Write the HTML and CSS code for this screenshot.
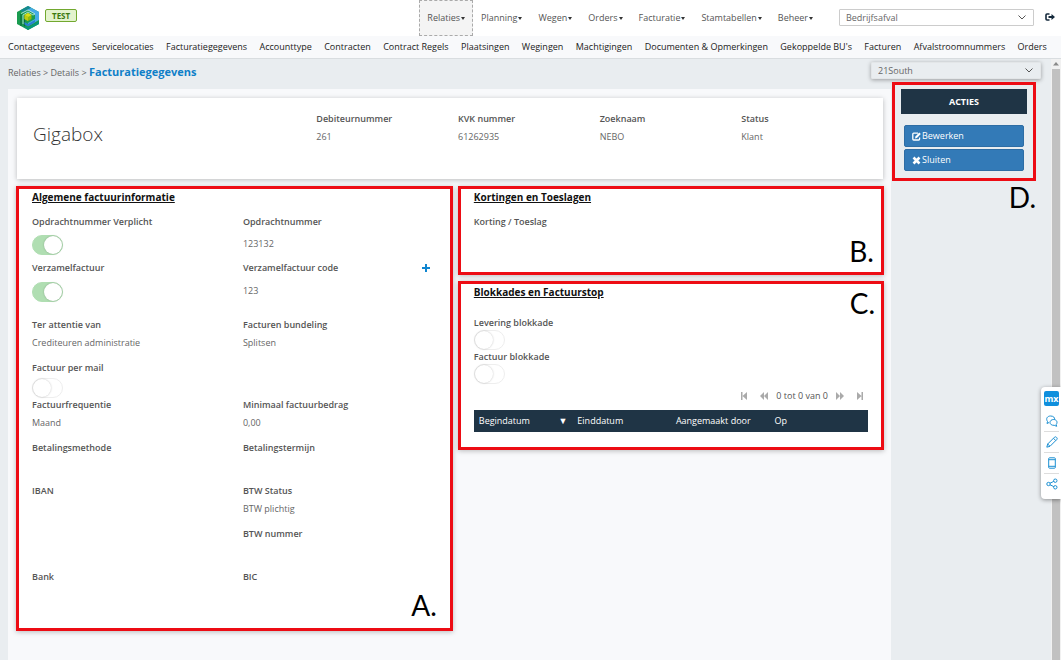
FILE: index.html
```html
<!DOCTYPE html>
<html lang="nl">
<head>
<meta charset="utf-8">
<title>Facturatiegegevens</title>
<meta name="viewport" content="width=device-width, initial-scale=1">
<link rel="stylesheet" href="styles.css">
</head>
<body>
<header class="topbar">
  <svg class="logo" viewBox="0 0 22 24" aria-label="Logo">
    <path d="M11 0 22 6v12l-11 6L0 18V6z" fill="#1a9c50"/>
    <path d="M11 0 22 6v8l-7 4-4 2v-3l7-4V8l-7-4-3-2z" fill="#45abe6"/>
    <path d="M11 0 3 4.400l3 1.800 5-2.700 3-1.700z" fill="#168a8e"/>
    <path d="M4 8v12M7.500 9v12" stroke="#0b6a3a" stroke-width="1.200"/>
    <path d="M4 7.500 11 4l7 4-2 1-5-3-5 3v9" fill="none" stroke="#c9ecf2" stroke-width=".8"/>
    <path d="M7.500 16 11 18l7-4v2.500l-7 4-3.500-2z" fill="#2a7fd0"/>
    <path d="M5 19.500 11 21.500l11-6V18l-11 6z" fill="#08967c"/>
    <path d="M11 7l3.500 2v4L11 15l-3.500-2V9z" fill="#8fb80e"/>
    <path d="M11 7l3.500 2L11 11 7.500 9z" fill="#d8de1a"/>
    <path d="M7.500 9 11 11v4l-3.500-2z" fill="#bccb12"/>
  </svg>
  <span class="env">TEST</span>
  <nav class="mainnav">
    <button class="active">Relaties</button>
    <button>Planning</button>
    <button>Wegen</button>
    <button>Orders</button>
    <button>Facturatie</button>
    <button>Stamtabellen</button>
    <button>Beheer</button>
  </nav>
  <select class="pick pick-unit" aria-label="Bedrijfsonderdeel"><option>Bedrijfsafval</option></select>
  <button class="logout" aria-label="Uitloggen">
    <svg viewBox="0 0 10 8"><path d="M4.500 1H2Q1 1 1 2v4q0 1 1 1h2.500" fill="none" stroke="#14293b" stroke-width="1.600"/><path d="M3.500 3h3V1L10 4 6.500 7V5h-3z" fill="#14293b"/></svg>
  </button>
</header>
<nav class="subnav">
  <a href="#">Contactgegevens</a>
  <a href="#">Servicelocaties</a>
  <a href="#">Facturatiegegevens</a>
  <a href="#">Accounttype</a>
  <a href="#">Contracten</a>
  <a href="#">Contract Regels</a>
  <a href="#">Plaatsingen</a>
  <a href="#">Wegingen</a>
  <a href="#">Machtigingen</a>
  <a href="#">Documenten &amp; Opmerkingen</a>
  <a href="#">Gekoppelde BU's</a>
  <a href="#">Facturen</a>
  <a href="#">Afvalstroomnummers</a>
  <a href="#">Orders</a>
</nav>
<div class="viewport">
  <div class="content">
    <div class="crumbs">
      <p>Relaties &gt; Details &gt; <strong>Facturatiegegevens</strong></p>
      <select class="pick pick-site" aria-label="Locatie"><option>21South</option></select>
    </div>
    <div class="columns">
      <main class="workspace">
        <section class="card summary">
          <h1>Gigabox</h1>
          <div class="field"><b>Debiteurnummer</b><span>261</span></div>
          <div class="field"><b>KVK nummer</b><span>61262935</span></div>
          <div class="field"><b>Zoeknaam</b><span>NEBO</span></div>
          <div class="field"><b>Status</b><span>Klant</span></div>
        </section>
        <div class="panels">
          <section class="panel general">
            <h2>Algemene factuurinformatie</h2>
            <div class="row roomy">
              <div class="field"><label for="po">Opdrachtnummer Verplicht</label><input class="switch" type="checkbox" id="po" checked></div>
              <div class="field"><b>Opdrachtnummer</b><span>123132</span></div>
            </div>
            <div class="row roomy spaced">
              <div class="field"><label for="verz">Verzamelfactuur</label><input class="switch" type="checkbox" id="verz" checked></div>
              <div class="field"><div class="with-add"><b>Verzamelfactuur code</b><button class="add" aria-label="Toevoegen"><svg viewBox="0 0 8 8"><path d="M4 0v8M0 4h8" stroke="#0f86d0" stroke-width="2"/></svg></button></div><span>123</span></div>
            </div>
            <div class="row">
              <div class="field"><b>Ter attentie van</b><span>Crediteuren administratie</span></div>
              <div class="field"><b>Facturen bundeling</b><span>Splitsen</span></div>
            </div>
            <div class="row tight">
              <div class="field"><label for="mail">Factuur per mail</label><input class="switch" type="checkbox" id="mail"></div>
            </div>
            <div class="row">
              <div class="field"><b>Factuurfrequentie</b><span>Maand</span></div>
              <div class="field"><b>Minimaal factuurbedrag</b><span>0,00</span></div>
            </div>
            <div class="row">
              <div class="field"><b>Betalingsmethode</b></div>
              <div class="field"><b>Betalingstermijn</b></div>
            </div>
            <div class="row">
              <div class="field"><b>IBAN</b></div>
              <div class="field"><b>BTW Status</b><span>BTW plichtig</span></div>
            </div>
            <div class="row">
              <div class="field"></div>
              <div class="field"><b>BTW nummer</b></div>
            </div>
            <div class="row">
              <div class="field"><b>Bank</b></div>
              <div class="field"><b>BIC</b></div>
            </div>
            <span class="mark mark-a">A.</span>
          </section>
          <div class="stack">
            <section class="panel discounts">
              <h2>Kortingen en Toeslagen</h2>
              <div class="field"><b>Korting / Toeslag</b></div>
              <span class="mark mark-b">B.</span>
            </section>
            <section class="panel blocks">
              <h2>Blokkades en Factuurstop</h2>
              <div class="field"><label for="lev">Levering blokkade</label><input class="switch" type="checkbox" id="lev"></div>
              <div class="field"><label for="fac">Factuur blokkade</label><input class="switch" type="checkbox" id="fac"></div>
              <div class="pager">
                <button aria-label="Eerste"><svg viewBox="0 0 8 8"><path d="M1 0h1.500v8H1zM7 0v8L2.500 4z"/></svg></button>
                <button aria-label="Vorige"><svg viewBox="0 0 8 8"><path d="M4 0v8L0 4zM8 0v8L4 4z"/></svg></button>
                <span>0 tot 0 van 0</span>
                <button aria-label="Volgende"><svg viewBox="0 0 8 8"><path d="M0 0v8l4-4zM4 0v8l4-4z"/></svg></button>
                <button aria-label="Laatste"><svg viewBox="0 0 8 8"><path d="M5.500 0H7v8H5.500zM1 0v8l4.500-4z"/></svg></button>
              </div>
              <table>
                <thead><tr><th class="sorted">Begindatum <span>▼</span></th><th>Einddatum</th><th>Aangemaakt door</th><th>Op</th></tr></thead>
              </table>
              <span class="mark mark-c">C.</span>
            </section>
          </div>
        </div>
      </main>
      <aside class="side">
        <section class="actions">
          <h2>ACTIES</h2>
          <button><svg viewBox="0 0 9 9"><path d="M6 1.200H1.700Q.8 1.200.8 2.100v5q0 .9.900.9h5q.9 0 .9-.9V5.500" fill="none" stroke="#fff" stroke-width="1.300"/><path d="M3 6.500l.4-2L7.300.4l1.500 1.500L4.900 6z" fill="#fff"/></svg>Bewerken</button>
          <button><svg viewBox="0 0 9 9"><path d="M1.500 1.500l6 6M7.500 1.500l-6 6" stroke="#fff" stroke-width="2.600"/></svg>Sluiten</button>
        </section>
        <span class="mark mark-d">D.</span>
      </aside>
    </div>
  </div>
  <div class="scrollbar" aria-hidden="true">
    <svg viewBox="0 0 10 10"><path d="M5 3l3 3.500H2z" fill="#8a8a8a"/></svg>
    <div class="thumb"></div>
  </div>
</div>
<div class="toolbox">
  <button class="mx">mx</button>
  <button aria-label="Feedback"><svg viewBox="0 0 12 12"><path d="M3 7.500 1 8.500l.5-2C-.5 3.500 1.500 1 4.500 1S9 2.700 8.500 4.500M7.800 4.500c-2.300 0-3.800 1.200-3.800 3s1.800 3 4.200 2.800l2.500 1-.5-1.800c1.800-2.200.4-5-2.400-5z"/></svg></button>
  <button aria-label="Bewerken"><svg viewBox="0 0 12 12"><path d="M.8 11.200l.9-3.200L8.500 1.200q1-.8 1.800 0l.5.500q.8.800 0 1.800L4 10.300zM7.500 2.300l2.200 2.200M1.700 8 4 10.300"/></svg></button>
  <button aria-label="Mobiel"><svg viewBox="0 0 12 12"><path d="M3.500.8h5q.8 0 .8.800v8.800q0 .8-.8.800h-5q-.8 0-.8-.8V1.600q0-.8.800-.8zM2.700 2.700h6.600M2.700 9.300h6.600"/></svg></button>
  <button aria-label="Delen"><svg viewBox="0 0 12 12"><circle cx="2.500" cy="6" r="1.700"/><circle cx="9.300" cy="2.700" r="1.700"/><circle cx="9.300" cy="9.300" r="1.700"/><path d="M4 5.200l3.800-1.800M4 6.800l3.800 1.800"/></svg></button>
</div>
</body>
</html>
```
FILE: styles.css
```css
* { box-sizing: border-box; }
body {
  margin: 0;
  min-height: 100vh;
  display: flex;
  flex-direction: column;
  position: relative;
  background: #fff;
  color: #555;
  font: 9px/14px "Open Sans", "Noto Sans", sans-serif;
}
h1, h2, p { margin: 0; }
button, select { font: inherit; color: inherit; }
button { border: 0; padding: 0; background: none; cursor: pointer; }
svg { display: block; }

.topbar { display: flex; height: 36px; padding: 0 6px 0 17px; }
.logo { width: 22px; height: 24px; margin-top: 6px; }
.env {
  height: 13px;
  margin: 9px 0 0 6px;
  padding: 0 6px;
  border: 1px solid #72a82f;
  border-radius: 2px;
  background: #e3f3cd;
  color: #3d7a10;
  font-weight: 700;
  font-size: 8px;
  line-height: 11px;
}
.mainnav { display: flex; margin-left: auto; }
.mainnav button { display: flex; align-items: center; padding: 0 8px; color: #555; }
.mainnav button::after {
  content: "";
  margin-left: 1px;
  border: 2px solid transparent;
  border-top: 3px solid #333;
  border-bottom: 0;
}
.mainnav .active { background: #f4f4f4; outline: 1px dashed #aaa; outline-offset: -1px; }
.pick {
  appearance: none;
  height: 17px;
  padding: 0 6px;
  border: 1px solid #ccc;
  border-radius: 1px;
  color: #666;
  background: #fff url("data:image/svg+xml,%3Csvg xmlns='http://www.w3.org/2000/svg' viewBox='0 0 8 5'%3E%3Cpath d='M.5.5 4 4 7.500.5' fill='none' stroke='%23555'/%3E%3C/svg%3E") no-repeat right 7px center / 8px 5px;
}
.pick-unit { width: 195px; margin: 9px 0 0 18px; }
.logout { width: 10px; height: 8px; margin: 13px 0 0 11px; }

.subnav {
  display: flex;
  justify-content: space-between;
  gap: 4px;
  height: 23px;
  padding: 4px 14px 0 8px;
  border-bottom: 1px solid #d9dde0;
  background: #f8f9fb;
  white-space: nowrap;
}
.subnav a { color: #222; text-decoration: none; }

.viewport { display: flex; flex: 1; background: #e9edf0; }
.content { display: flex; flex: 1; flex-direction: column; }
.crumbs { display: flex; justify-content: space-between; height: 30px; padding: 3px 10px 0 8px; color: #666; }
.crumbs p { line-height: 20px; }
.crumbs strong { color: #0f7fc8; font-size: 11px; }
.pick-site { width: 170px; border-color: #e3e6e8; background-color: #e9edf0; box-shadow: 0 1px 4px rgba(0, 0, 0, .35); }

.columns { display: flex; flex: 1; padding-left: 8px; }
.workspace { flex: 1; padding: 9px 7px 0 8px; background: #f8f9fb; }
.card, .panel { background: #fff; box-shadow: 0 1px 5px rgba(0, 0, 0, .25); }
.summary {
  display: grid;
  grid-template-columns: 2fr repeat(4, 1fr);
  margin: 0 1px 7px;
  padding: 14px 0 34px 16px;
}
.summary h1 { color: #333; font-size: 19px; font-weight: 300; line-height: 44px; grid-row: 1; height: 33px; }
.field { display: flex; flex-direction: column; gap: 4px; }
.field b, .field label { font-weight: 600; }
.field span { color: #666; }

.panels { display: grid; grid-template-columns: 41fr 40fr; gap: 5px; align-items: start; }
.stack { display: flex; flex-direction: column; gap: 6px; }
.panel { position: relative; border: 3px solid #ed0c14; padding: 1px 13px 0; }
.panel h2 { margin-bottom: 11px; color: #111; font-size: 10px; line-height: 14px; text-decoration: underline; }
.general { padding: 1px 0 15px 13px; }
.row { display: grid; grid-template-columns: 1fr 1fr; column-gap: 4px; min-height: 43px; }
.tight { min-height: 37px; }
.tight .field { gap: 3px; }
.roomy { min-height: 46px; }
.roomy .field { gap: 6px; }
.roomy span { line-height: 18px; }
.spaced { min-height: 57px; }
.spaced .field { gap: 7px; }
.with-add { display: flex; align-items: center; justify-content: space-between; padding-right: 20px; }
.add, .add svg { width: 8px; height: 8px; }
.switch {
  appearance: none;
  position: relative;
  width: 31px;
  height: 20px;
  margin: 0;
  border: 1px solid #eee;
  border-radius: 10px;
  background: #fff;
}
.switch::after {
  content: "";
  position: absolute;
  top: 0;
  left: 0;
  width: 18px;
  height: 18px;
  border-radius: 50%;
  background: #fff;
  box-shadow: 0 0 2px rgba(0, 0, 0, .25);
}
.switch:checked { border-color: #b0deb2; background: #b0deb2; }
.switch:checked::after { left: auto; right: 0; }

.discounts { min-height: 89px; }
.blocks { padding-bottom: 15px; }
.blocks h2 { margin-bottom: 17px; }
.blocks .field { gap: 0; }
.pager { display: flex; align-items: center; justify-content: flex-end; height: 14px; margin: 5px 4px 7px; }
.pager button { width: 8px; height: 8px; margin-right: 12px; }
.pager button:last-child { margin-right: 0; }
.pager span { margin: 0 8px 0 -4px; }
.pager svg { fill: #aaa; }
table { width: 100%; table-layout: fixed; border-collapse: collapse; background: #1f3445; color: #fff; }
th { height: 22px; padding: 0 5px; font-weight: 400; text-align: left; white-space: nowrap; }
.sorted span { float: right; }

.mark { position: absolute; color: #000; font: 400 28px/28px Lato, sans-serif; }
.mark-a { right: 13px; bottom: 9px; }
.mark-b { right: 7px; bottom: 7px; }
.mark-c { right: 6px; top: 5px; }
.mark-d { right: 15px; top: 94px; }

.side { position: relative; width: 160px; padding: 0 15px 0 1px; }
.actions {
  display: flex;
  flex-direction: column;
  gap: 2px;
  margin-top: -7px;
  padding: 4px 9px 7px;
  border: 3px solid #ed0c14;
}
.actions h2 { margin: 0 -3px 9px; background: #1f3445; color: #fff; font-size: 9px; line-height: 25px; text-align: center; }
.actions button {
  display: flex;
  align-items: center;
  gap: 1px;
  height: 22px;
  padding: 0 7px;
  border: 1px solid #2e6da4;
  border-radius: 2px;
  background: #337ab7;
  color: #fff;
}
.actions svg { width: 9px; height: 9px; }

.scrollbar { width: 10px; display: flex; flex-direction: column; background: #f1f1f1; }
.scrollbar svg { width: 10px; height: 10px; }
.thumb { flex: 1; margin: 0 1px; background: #c1c1c1; }

.toolbox {
  position: absolute;
  top: 387px;
  right: 0;
  width: 20px;
  padding: 4px 2px 5px 3px;
  border-radius: 4px 0 0 4px;
  background: #fff;
  box-shadow: 0 1px 4px rgba(0, 0, 0, .4);
}
.toolbox button { display: flex; align-items: center; justify-content: center; width: 15px; height: 21px; border-top: 1px solid #ddd; }
.toolbox svg { width: 12px; height: 12px; fill: none; stroke: #1b8fd2; }
.toolbox .mx { height: 15px; border: 0; margin-bottom: 4px; border-radius: 2px; background: #0f8fdd; color: #fff; font-weight: 700; line-height: 12px; }
.toolbox .mx + button { border-top: 0; }
```
